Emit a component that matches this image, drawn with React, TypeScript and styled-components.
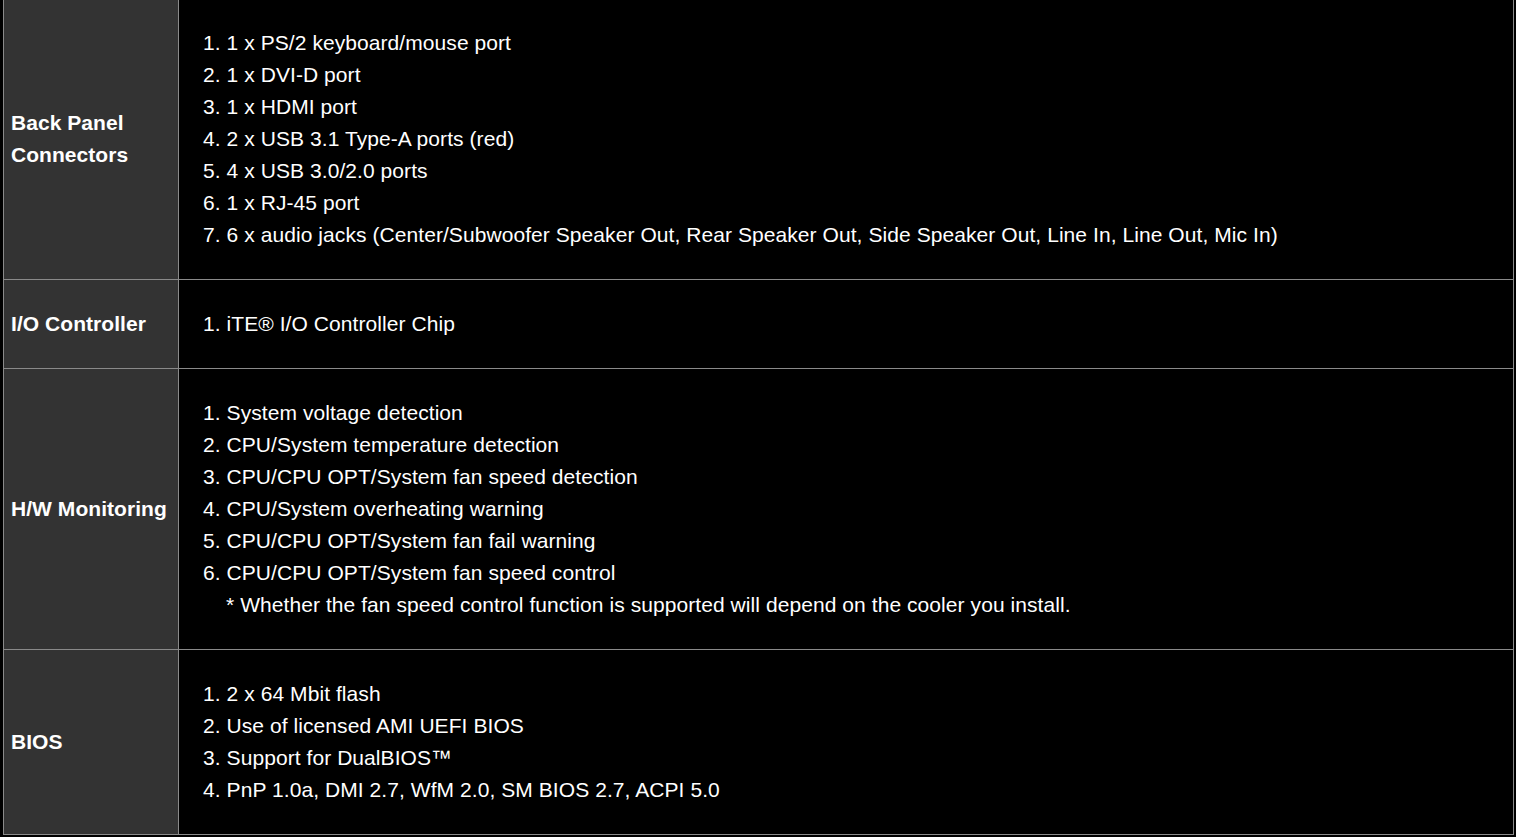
import React from "react";
import styled, { createGlobalStyle } from "styled-components";

const GlobalStyle = createGlobalStyle`
  html, body {
    margin: 0;
    padding: 0;
    background: #000;
    overflow: hidden;
  }
  body {
    font-family: "Liberation Sans", Arial, sans-serif;
  }
`;

const Page = styled.div`
  width: 1516px;
  height: 837px;
  background: #000;
  overflow: hidden;
`;

const Table = styled.div`
  box-sizing: border-box;
  width: 1511px;
  margin: -1px 0 0 3px;
  border-left: 1px solid #8a8a8a;
  border-right: 1px solid #8a8a8a;
`;

const Row = styled.div`
  display: grid;
  grid-template-columns: 175px 1fr;
  border-bottom: 1px solid #8a8a8a;
`;

const Label = styled.div`
  box-sizing: border-box;
  background: #333333;
  border-right: 1px solid #8a8a8a;
  display: flex;
  align-items: center;
  padding: 0 6px 0 7px;
  color: #ffffff;
  font-weight: bold;
  font-size: 21px;
  line-height: 32px;
  letter-spacing: 0.05px;
`;

const Content = styled.div`
  padding: 28px 24px 28px 24px;
  color: #ffffff;
  font-size: 21px;
  line-height: 32px;
  letter-spacing: 0.07px;
`;

const Line = styled.div<{ $indent?: boolean }>`
  white-space: nowrap;
  padding-left: ${(p) => (p.$indent ? "23px" : "0")};
`;

type Spec = { label: React.ReactNode; lines: string[]; note?: string };

const specs: Spec[] = [
  {
    label: (
      <>
        Back Panel
        <br />
        Connectors
      </>
    ),
    lines: [
      "1 x PS/2 keyboard/mouse port",
      "1 x DVI-D port",
      "1 x HDMI port",
      "2 x USB 3.1 Type-A ports (red)",
      "4 x USB 3.0/2.0 ports",
      "1 x RJ-45 port",
      "6 x audio jacks (Center/Subwoofer Speaker Out, Rear Speaker Out, Side Speaker Out, Line In, Line Out, Mic In)",
    ],
  },
  {
    label: "I/O Controller",
    lines: ["iTE® I/O Controller Chip"],
  },
  {
    label: "H/W Monitoring",
    lines: [
      "System voltage detection",
      "CPU/System temperature detection",
      "CPU/CPU OPT/System fan speed detection",
      "CPU/System overheating warning",
      "CPU/CPU OPT/System fan fail warning",
      "CPU/CPU OPT/System fan speed control",
    ],
    note: "* Whether the fan speed control function is supported will depend on the cooler you install.",
  },
  {
    label: "BIOS",
    lines: [
      "2 x 64 Mbit flash",
      "Use of licensed AMI UEFI BIOS",
      "Support for DualBIOS™",
      "PnP 1.0a, DMI 2.7, WfM 2.0, SM BIOS 2.7, ACPI 5.0",
    ],
  },
];

export default function App() {
  return (
    <Page>
      <GlobalStyle />
      <Table>
        {specs.map((s, i) => (
          <Row key={i}>
            <Label>
              <div>{s.label}</div>
            </Label>
            <Content>
              {s.lines.map((l, j) => (
                <Line key={j}>
                  {j + 1}. {l}
                </Line>
              ))}
              {s.note && <Line $indent>{s.note}</Line>}
            </Content>
          </Row>
        ))}
      </Table>
    </Page>
  );
}
